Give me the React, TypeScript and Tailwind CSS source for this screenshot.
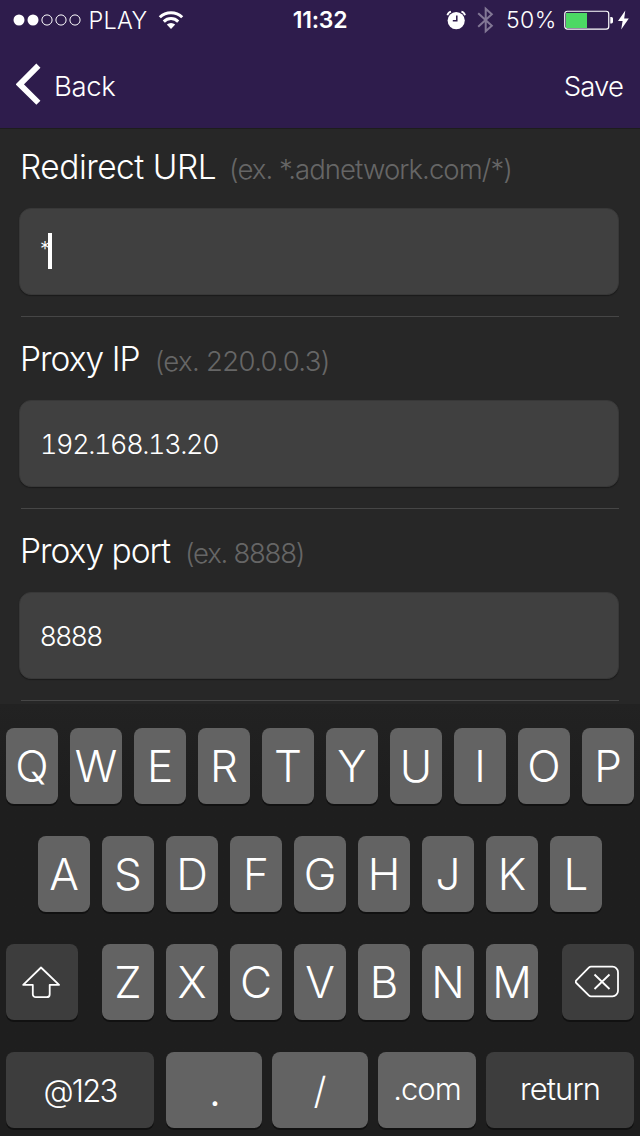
import { FunctionComponent, ReactNode } from "react";
import clsx from "clsx";

interface FieldProps {
  label: string;
  labelClass: string;
  hint: string;
  hintClass: string;
  value: string;
  valueClass: string;
  focused?: boolean;
}

const fields: FieldProps[] = [
  {
    label: "Redirect URL",
    labelClass: "tracking-[-0.5px]",
    hint: "(ex. *.adnetwork.com/*)",
    hintClass: "ml-[13px] tracking-[-0.93px]",
    value: "*",
    valueClass: "text-[20px] -mr-[2px] pb-[5px]",
    focused: true,
  },
  {
    label: "Proxy IP",
    labelClass: "tracking-[-0.95px]",
    hint: "(ex. 220.0.0.3)",
    hintClass: "ml-[15px] tracking-[-0.65px]",
    value: "192.168.13.20",
    valueClass: "pt-[3px] tabular-nums tracking-[-1.4px]",
  },
  {
    label: "Proxy port",
    labelClass: "tracking-[-1px]",
    hint: "(ex. 8888)",
    hintClass: "ml-[15px] tracking-[-1.25px]",
    value: "8888",
    valueClass: "pt-[3px] tracking-[-1px]",
  },
];

const StatusBar: FunctionComponent = () => (
  <div className="grid h-10 grid-cols-[1fr_auto_1fr] grid-rows-[40px] items-center text-[23px] leading-[39px]">
    <div className="flex items-center pl-[12.5px]">
      <svg width="69" height="12" viewBox="0 0 69 12" fill="none" stroke="#fff">
        <circle cx="6" cy="6" r="5.5" fill="#fff" stroke="none" />
        <circle cx="20" cy="6" r="5.5" fill="#fff" stroke="none" />
        <circle cx="34" cy="6" r="5.1" />
        <circle cx="48" cy="6" r="5.1" />
        <circle cx="62" cy="6" r="5.1" />
      </svg>
      <span className="ml-[7px] w-[59px] pt-px text-[23.5px] tracking-[0.3px]">PLAY</span>
      <svg className="ml-[10px]" width="26" height="20" viewBox="0 0 26 20" fill="none" stroke="#fff" strokeWidth="3">
        <path d="M1.8 7.3a16 16 0 0 1 22.4 0" />
        <path d="M5.8 11.6a10.2 10.2 0 0 1 14.4 0" />
        <path d="M13 19l-4.2-4.4a6 6 0 0 1 8.4 0z" fill="#fff" stroke="none" />
      </svg>
    </div>
    <span className="pt-px font-semibold tracking-[-0.2px]">11:32</span>
    <div className="flex items-center justify-end pr-[11px]">
      <svg width="20" height="20" viewBox="0 0 20 20">
        <circle cx="10.2" cy="10.6" r="8.6" fill="#fff" />
        <path d="M10.8 5.6v5.2H6.8" fill="none" stroke="#2e1c4c" strokeWidth="1.5" />
        <path d="M1.4 5.2A5 5 0 0 1 5 1.6M19 5.2a5 5 0 0 0-3.6-3.6" fill="none" stroke="#fff" strokeWidth="1.8" />
      </svg>
      <svg className="ml-[11px]" width="17" height="28" viewBox="0 0 17 28" fill="none" stroke="#827795" strokeWidth="2">
        <path d="M1.2 7.2l13.6 12.6-6.1 5.4V2.8l6.1 5.4L1.2 20.8" />
      </svg>
      <span className="ml-[12px] pt-px tracking-[0.4px]">50%</span>
      <svg className="ml-[7.4px]" width="50" height="20" viewBox="0 0 50 20">
        <rect x="0.75" y="1.25" width="44" height="17.8" rx="2.6" fill="none" stroke="#fff" strokeWidth="1.2" />
        <rect x="2" y="3" width="21" height="15" fill="#4cd964" />
        <path d="M46.3 7h1.2a1.6 1.6 0 0 1 1.5 1.6v3.2a1.6 1.6 0 0 1-1.5 1.6h-1.2z" fill="#fff" />
      </svg>
      <svg className="ml-[4px]" width="11" height="20" viewBox="0 0 11 20">
        <path d="M7.3.5L0 11h4.6L3.2 19.5 10.8 8.4H6.2z" fill="#fff" />
      </svg>
    </div>
  </div>
);

const Header: FunctionComponent = () => (
  <header className="h-32 bg-[#2e1c4c] shadow-[0_1px_0_#1d1d1d]">
    <StatusBar />
    <nav className="flex h-[88px] items-center justify-between pr-[17px] pl-4 text-[27.5px]">
      <button className="flex items-center">
        <svg width="26" height="42" viewBox="0 0 26 42" fill="none" stroke="#fff" strokeWidth="5.8">
          <path d="M22.4 2.6L3.8 21.4l18.6 18.4" />
        </svg>
        <span className="ml-[12px] pt-[5px] leading-[83px] tracking-[-0.4px]">Back</span>
      </button>
      <button className="pt-[5px] leading-[83px] tracking-[-0.9px]">Save</button>
    </nav>
  </header>
);

const Field: FunctionComponent<FieldProps> = ({ label, labelClass, hint, hintClass, value, valueClass, focused }) => (
  <section className="h-48 pr-[21px] pl-[19px]">
    <div className="flex h-20 items-baseline pl-px text-[33.5px] leading-[79px] whitespace-pre">
      <label className={labelClass}>{label}</label>
      <span className={clsx("text-[27.5px] text-[#666]", hintClass)}>{hint}</span>
    </div>
    <div className="flex h-[87px] items-center rounded-[12px] border border-[#383838] bg-[#404040] pl-5 text-[27px] shadow-[0_1px_1px_#1b1b1b]">
      <span className={valueClass}>{value}</span>
      {focused && <span className="mb-[2px] h-9 w-1 bg-white" />}
    </div>
    <div className="mt-[21px] ml-[2px] h-px bg-[#464646]" />
  </section>
);

interface KeyProps {
  children: ReactNode;
  className?: string;
  dark?: boolean;
}

const Key: FunctionComponent<KeyProps> = ({ children, className = "w-[52px]", dark }) => (
  <button
    className={clsx(
      "flex h-[76px] shrink-0 items-center justify-center rounded-lg shadow-[0_2px_0_#111]",
      dark ? "bg-[#3d3d3d]" : "bg-[#636363]",
      className,
    )}
  >
    {children}
  </button>
);

const Keyboard: FunctionComponent = () => (
  <div className="flex h-[432px] flex-col gap-8 bg-linear-to-b from-[#222] via-[#1e1e1e] via-20% to-[#1e1e1e] px-1.5 pt-6 text-[44px] leading-[76px]">
    <div className="flex justify-center gap-3">
      {"QWERTYUIOP".split("").map((k) => (
        <Key key={k}>{k}</Key>
      ))}
    </div>
    <div className="flex justify-center gap-3">
      {"ASDFGHJKL".split("").map((k) => (
        <Key key={k}>{k}</Key>
      ))}
    </div>
    <div className="flex justify-between">
      <Key dark className="w-[72px]">
        <svg width="40" height="34" viewBox="0 0 40 34" fill="none" stroke="#fff" strokeWidth="1.8" strokeLinejoin="round">
          <path d="M19 2.5L1.2 19.8h9.6v9.4a3 3 0 0 0 3 3h10.9a3 3 0 0 0 3-3v-9.4h9.4z" />
        </svg>
      </Key>
      <div className="flex gap-3">
        {"ZXCVBNM".split("").map((k) => (
          <Key key={k}>{k}</Key>
        ))}
      </div>
      <Key dark className="w-[72px]">
        <svg width="46" height="34" viewBox="0 0 46 34" fill="none" stroke="#fff" strokeWidth="1.8" strokeLinejoin="round">
          <path d="M16 1.7h21.5a5.5 5.5 0 0 1 5.5 5.5v18.600a5.5 5.5 0 0 1-5.5 5.5H16c-1 0-1.5-.3-2.2-1L1.3 18c-.8-.9-.8-1.8 0-2.7L13.800 2.7c.7-.7 1.2-1 2.2-1z" />
          <path d="M19.5 9.5l15 14.5M34.5 9.5l-15 14.5" />
        </svg>
      </Key>
    </div>
    <div className="flex">
      <Key dark className="w-[148px] pt-0.5 text-[31px] tracking-[-1.8px]">
        @123
      </Key>
      <Key className="ml-3 w-24 pl-0.5">.</Key>
      <Key className="ml-2.5 w-24 pt-0.5 text-[37px]">/</Key>
      <Key className="ml-2.5 w-[98px] pb-0.5 text-[31px] tracking-[-1px]">.com</Key>
      <Key dark className="ml-2.5 w-[148px] pb-0.5 text-[31px] tracking-[-1px]">
        return
      </Key>
    </div>
  </div>
);

const App: FunctionComponent = () => (
  <div className="h-[1136px] w-[640px] overflow-hidden bg-[#272727] font-['Inter',sans-serif] font-light text-white">
    <Header />
    <main className="h-[576px]">
      {fields.map((field) => (
        <Field key={field.label} {...field} />
      ))}
    </main>
    <Keyboard />
  </div>
);

export default App;
